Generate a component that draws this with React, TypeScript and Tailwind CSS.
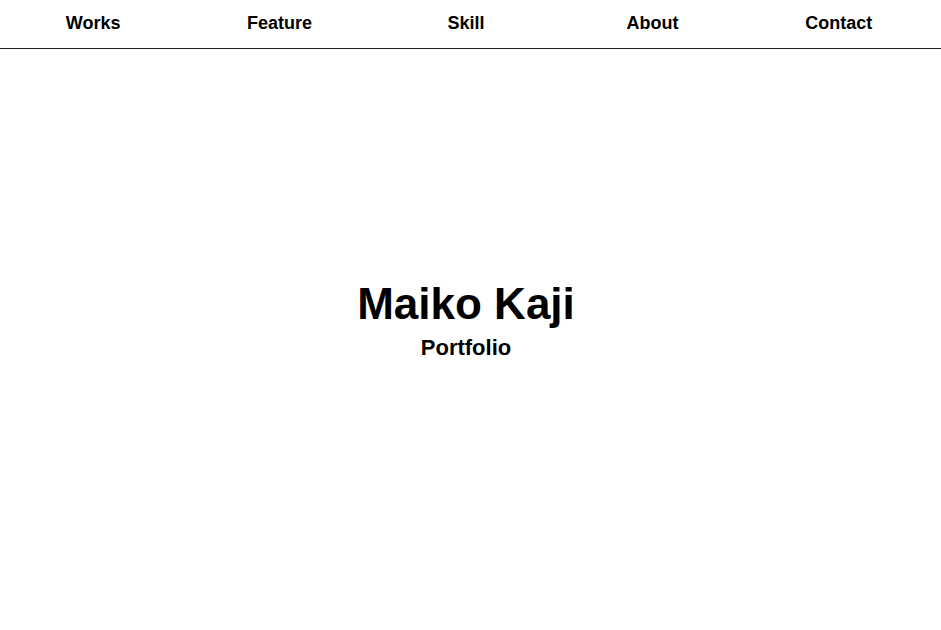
const navItems = ['Works', 'Feature', 'Skill', 'About', 'Contact'];

export default function App() {
  return (
    <div
      className="flex h-screen flex-col bg-white pr-[9px] text-black"
      style={{ fontFamily: '"Liberation Sans", Arial, sans-serif' }}
    >
      <header className="-mr-[9px] border-b border-[#222] pr-[9px]">
        <nav className="grid h-12 grid-cols-5 items-center pb-[2px]">
          {navItems.map((item) => (
            <a key={item} href="#" className="text-center text-[18px] font-bold leading-none">
              {item}
            </a>
          ))}
        </nav>
      </header>

      <main className="flex flex-1 flex-col items-center justify-center pb-10">
        <h1 className="text-[44px] font-bold leading-[1.2]">Maiko Kaji</h1>
        <p className="mt-1 text-[22px] font-bold leading-[1.2]">Portfolio</p>
      </main>
    </div>
  );
}
